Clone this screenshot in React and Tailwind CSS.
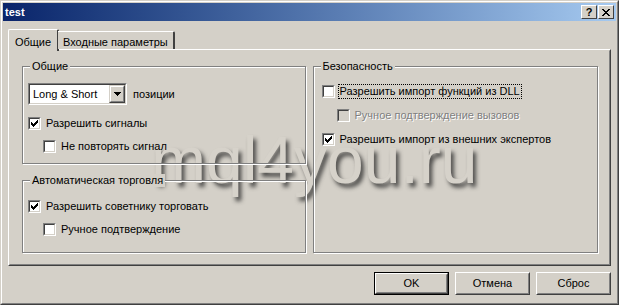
import React from "react";

const font = { fontFamily: '"Liberation Sans", Arial, sans-serif' };

function Check({ checked, disabled }) {
  return (
    <span className="inline-block w-[13px] h-[13px] border-t border-l border-[#808080] border-r-white border-b-white border shrink-0">
      <span className={`flex w-[11px] h-[11px] border border-t-[#404040] border-l-[#404040] border-r-[#d4d0c8] border-b-[#d4d0c8] items-center justify-center ${disabled ? "bg-[#d4d0c8]" : "bg-white"}`}>
        {checked && (
          <svg width="7" height="7" viewBox="0 0 7 7" shapeRendering="crispEdges">
            <path d="M0 2h1v3H0zM1 3h1v3H1zM2 4h1v3H2zM3 3h1v3H3zM4 2h1v3H4zM5 1h1v3H5zM6 0h1v3H6z" fill="#000" />
          </svg>
        )}
      </span>
    </span>
  );
}

function CheckRow({ checked, disabled, label, focus, className }) {
  return (
    <div className={`flex items-center h-[13px] leading-[13px] ${className}`}>
      <Check checked={checked} disabled={disabled} />
      {disabled ? (
        <span className="ml-[5px] text-[#808080] [text-shadow:1px_1px_0_#fff]">{label}</span>
      ) : focus ? (
        <span className="ml-[4px] px-[1px] leading-[13px] outline-1 outline-dotted outline-black">{label}</span>
      ) : (
        <span className="ml-[5px]">{label}</span>
      )}
    </div>
  );
}

function Group({ title, className, children }) {
  return (
    <div className={`relative border border-[#808080] shadow-[inset_1px_1px_0_#fff,1px_1px_0_#fff] ${className}`}>
      <span className="absolute -top-[7px] left-[7px] px-[2px] bg-[#d4d0c8] leading-[13px]">{title}</span>
      {children}
    </div>
  );
}

function Btn({ children, def }) {
  return (
    <div className={`w-[75px] h-[23px] ${def ? "border border-black" : ""}`}>
      <div className="w-full h-full border border-t-white border-l-white border-r-[#404040] border-b-[#404040]">
        <div className="w-full h-full border border-t-[#d4d0c8] border-l-[#d4d0c8] border-r-[#808080] border-b-[#808080] flex items-center justify-center">
          {children}
        </div>
      </div>
    </div>
  );
}

export default function App() {
  return (
    <div style={font} className="relative w-[619px] h-[305px] text-[11px] text-black bg-[#d4d0c8] border border-t-[#d4d0c8] border-l-[#d4d0c8] border-r-[#404040] border-b-[#404040] overflow-hidden">
      {/* Watermark */}
      <div className="absolute left-[150px] top-[126px] text-[66px] leading-none text-[#d6d2ca] [text-shadow:3px_4px_4px_rgba(40,40,40,0.8)] pointer-events-none select-none">
        mql4you.ru
      </div>

      <div className="relative w-full h-full border border-t-white border-l-white border-r-[#808080] border-b-[#808080] p-px flex flex-col">
        {/* Title bar */}
        <div className="h-[18px] shrink-0 flex items-center justify-between pl-[2px] pr-[2px] bg-gradient-to-r from-[#0a246a] to-[#a6caf0]">
          <span className="text-white font-bold text-[11px]">test</span>
          <div className="flex gap-[1px]">
            <div className="w-[16px] h-[14px] bg-[#d4d0c8] border border-t-white border-l-white border-r-[#404040] border-b-[#404040] flex items-center justify-center font-bold text-[11px] leading-none">?</div>
            <div className="w-[16px] h-[14px] bg-[#d4d0c8] border border-t-white border-l-white border-r-[#404040] border-b-[#404040] flex items-center justify-center">
              <svg width="8" height="7" viewBox="0 0 8 7" shapeRendering="crispEdges">
                <path d="M0 0h2v1H0zM6 0h2v1H6zM1 1h2v1H1zM5 1h2v1H5zM2 2h4v1H2zM3 3h2v1H3zM2 4h4v1H2zM1 5h2v1H1zM5 5h2v1H5zM0 6h2v1H0zM6 6h2v1H6z" fill="#000" />
              </svg>
            </div>
          </div>
        </div>

        {/* Tabs */}
        <div className="flex items-end pl-[5px] pr-[5px] mt-[6px] h-[22px] relative z-10">
          <div className="w-[51px] h-[22px] -mb-[2px] bg-[#d4d0c8] border-l border-t border-white border-r-2 border-r-[#404040] rounded-t-[2px] flex justify-center pt-[4px] -mr-[1px]">
            Общие
          </div>
          <div className="w-[117px] h-[18px] bg-[#d4d0c8] border-t border-white border-r-2 border-r-[#404040] rounded-tr-[2px] flex pl-[5px] pt-[2px]">
            Входные параметры
          </div>
        </div>

        {/* Panel */}
        <div className="ml-[5px] mr-[5px] h-[217px] border border-t-white border-l-white border-r-[#404040] border-b-[#404040]">
          <div className="w-full h-full border border-t-[#d4d0c8] border-l-[#d4d0c8] border-r-[#808080] border-b-[#808080] flex pl-[12px] pr-[11px] pt-[15px] gap-[7px]">
            <div className="flex flex-col w-[284px]">
              <Group title="Общие" className="h-[98px]">
                <div className="flex items-center ml-[5px] mt-[16px]">
                  <div className="w-[99px] h-[22px] border border-t-[#808080] border-l-[#808080] border-r-white border-b-white">
                    <div className="w-full h-full border border-t-[#404040] border-l-[#404040] border-r-[#d4d0c8] border-b-[#d4d0c8] bg-white flex items-center justify-between">
                      <span className="pl-[3px] text-[11px]">Long &amp; Short</span>
                      <div className="w-[16px] h-[18px] bg-[#d4d0c8] border border-t-[#d4d0c8] border-l-[#d4d0c8] border-r-[#404040] border-b-[#404040]">
                        <div className="w-full h-full border border-t-white border-l-white border-r-[#808080] border-b-[#808080] flex items-center justify-center">
                          <svg width="7" height="4" viewBox="0 0 7 4" shapeRendering="crispEdges">
                            <path d="M0 0h7v1H0zM1 1h5v1H1zM2 2h3v1H2zM3 3h1v1H3z" fill="#000" />
                          </svg>
                        </div>
                      </div>
                    </div>
                  </div>
                  <span className="ml-[6px]">позиции</span>
                </div>
                <CheckRow checked label="Разрешить сигналы" className="ml-[5px] mt-[12px]" />
                <CheckRow label="Не повторять сигнал" className="ml-[20px] mt-[10px]" />
              </Group>
              <Group title="Автоматическая торговля" className="h-[73px] mt-[16px]">
                <CheckRow checked label="Разрешить советнику торговать" className="ml-[5px] mt-[19px]" />
                <CheckRow label="Ручное подтверждение" className="ml-[20px] mt-[10px]" />
              </Group>
            </div>
            <Group title="Безопасность" className="w-[286px] h-[187px]">
              <CheckRow label="Разрешить импорт функций из DLL" focus className="ml-[8px] mt-[18px]" />
              <CheckRow disabled label="Ручное подтверждение вызовов" className="ml-[23px] mt-[11px]" />
              <CheckRow checked label="Разрешить импорт из внешних экспертов" className="ml-[8px] mt-[11px]" />
            </Group>
          </div>
        </div>

        {/* Buttons */}
        <div className="flex justify-end gap-[6px] mr-[5px] mt-[6px]">
          <Btn def>OK</Btn>
          <Btn>Отмена</Btn>
          <Btn>Сброс</Btn>
        </div>
      </div>
    </div>
  );
}
